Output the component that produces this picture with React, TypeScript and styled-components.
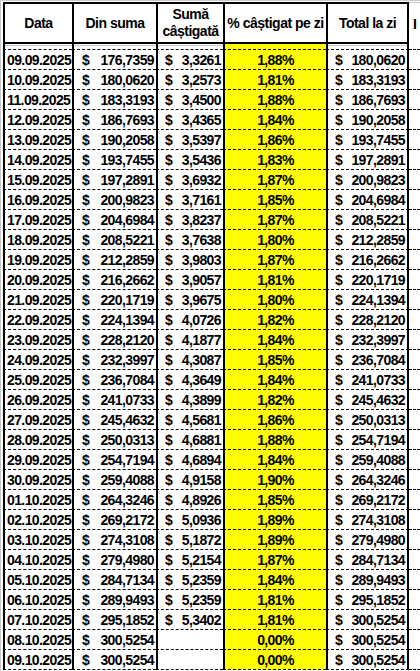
import styled, { createGlobalStyle } from 'styled-components';

type Row = [string, string, string | null, string, string];

const rows: Row[] = [
  ['09.09.2025', '176,7359', '3,3261', '1,88%', '180,0620'],
  ['10.09.2025', '180,0620', '3,2573', '1,81%', '183,3193'],
  ['11.09.2025', '183,3193', '3,4500', '1,88%', '186,7693'],
  ['12.09.2025', '186,7693', '3,4365', '1,84%', '190,2058'],
  ['13.09.2025', '190,2058', '3,5397', '1,86%', '193,7455'],
  ['14.09.2025', '193,7455', '3,5436', '1,83%', '197,2891'],
  ['15.09.2025', '197,2891', '3,6932', '1,87%', '200,9823'],
  ['16.09.2025', '200,9823', '3,7161', '1,85%', '204,6984'],
  ['17.09.2025', '204,6984', '3,8237', '1,87%', '208,5221'],
  ['18.09.2025', '208,5221', '3,7638', '1,80%', '212,2859'],
  ['19.09.2025', '212,2859', '3,9803', '1,87%', '216,2662'],
  ['20.09.2025', '216,2662', '3,9057', '1,81%', '220,1719'],
  ['21.09.2025', '220,1719', '3,9675', '1,80%', '224,1394'],
  ['22.09.2025', '224,1394', '4,0726', '1,82%', '228,2120'],
  ['23.09.2025', '228,2120', '4,1877', '1,84%', '232,3997'],
  ['24.09.2025', '232,3997', '4,3087', '1,85%', '236,7084'],
  ['25.09.2025', '236,7084', '4,3649', '1,84%', '241,0733'],
  ['26.09.2025', '241,0733', '4,3899', '1,82%', '245,4632'],
  ['27.09.2025', '245,4632', '4,5681', '1,86%', '250,0313'],
  ['28.09.2025', '250,0313', '4,6881', '1,88%', '254,7194'],
  ['29.09.2025', '254,7194', '4,6894', '1,84%', '259,4088'],
  ['30.09.2025', '259,4088', '4,9158', '1,90%', '264,3246'],
  ['01.10.2025', '264,3246', '4,8926', '1,85%', '269,2172'],
  ['02.10.2025', '269,2172', '5,0936', '1,89%', '274,3108'],
  ['03.10.2025', '274,3108', '5,1872', '1,89%', '279,4980'],
  ['04.10.2025', '279,4980', '5,2154', '1,87%', '284,7134'],
  ['05.10.2025', '284,7134', '5,2359', '1,84%', '289,9493'],
  ['06.10.2025', '289,9493', '5,2359', '1,81%', '295,1852'],
  ['07.10.2025', '295,1852', '5,3402', '1,81%', '300,5254'],
  ['08.10.2025', '300,5254', null, '0,00%', '300,5254'],
  ['09.10.2025', '300,5254', null, '0,00%', '300,5254'],
];

const GlobalStyle = createGlobalStyle`
  html, body {
    margin: 0;
    padding: 0;
    background: #fff;
    overflow: hidden;
  }
  body {
    font-family: "Liberation Sans", Arial, sans-serif;
    font-size: 14px;
    font-weight: 700;
    color: #000;
  }
`;

function Money({ value, pad }: { value: string | null; pad: number }) {
  if (!value) return null;
  return (
    <MoneyBox $pad={pad}>
      <span>$</span>
      <span>{value}</span>
    </MoneyBox>
  );
}

export default function App() {
  return (
    <>
      <GlobalStyle />
      <Sheet>
        <TopStrip />
        <Grid>
          <HeadCell>Data</HeadCell>
          <HeadCell>Din suma</HeadCell>
          <HeadCell>Sumă<br />câștigată</HeadCell>
          <HeadCell>% câștigat pe zi</HeadCell>
          <HeadCell $last>Total la zi</HeadCell>
          <ExtraHead>I</ExtraHead>

          <Spacer />
          <Spacer />
          <Spacer />
          <Spacer $yellow />
          <Spacer $last />
          <ExtraCell $spacer />

          {rows.map(([date, from, gain, pct, total]) => (
            <RowGroup key={date}>
              <Cell>{date}</Cell>
              <Cell><Money value={from} pad={8} /></Cell>
              <Cell><Money value={gain} pad={7} /></Cell>
              <Cell $yellow $center>{pct}</Cell>
              <Cell $last><Money value={total} pad={7} /></Cell>
              <ExtraCell />
            </RowGroup>
          ))}
        </Grid>
      </Sheet>
    </>
  );
}

const Sheet = styled.div`
  box-sizing: border-box;
  width: 100%;
  border-left: 1px solid #c8c8c8;
  padding-left: 2px;
  height: 671px;
  overflow: hidden;
`;

const TopStrip = styled.div`
  height: 1px;
  border-top: 1px solid #c8c8c8;
  margin-left: -3px;
`;

const Grid = styled.div`
  display: grid;
  grid-template-columns: 69px 84px 67px 103px 83px 1fr;
  grid-auto-rows: auto;
`;

const RowGroup = styled.div`
  display: contents;
`;

const HeadCell = styled.div<{ $last?: boolean }>`
  box-sizing: border-box;
  height: 42px;
  border-top: 2px solid #000;
  border-bottom: 2px solid #000;
  border-left: 2px solid #000;
  border-right: ${(p) => (p.$last ? '2px solid #000' : 'none')};
  display: flex;
  align-items: center;
  justify-content: center;
  text-align: center;
  line-height: 17px;
  background: #fff;
  white-space: nowrap;
  letter-spacing: -0.5px;
`;

const ExtraHead = styled.div`
  box-sizing: border-box;
  height: 42px;
  border-top: 1px solid #c8c8c8;
  display: flex;
  align-items: center;
  padding-left: 4px;
  overflow: hidden;
`;

const Spacer = styled.div<{ $yellow?: boolean; $last?: boolean }>`
  box-sizing: border-box;
  height: 6px;
  border-left: 2px solid #000;
  border-right: ${(p) => (p.$last ? '2px solid #000' : 'none')};
  border-bottom: 1px dashed #000;
  background: ${(p) =>
    p.$yellow
      ? '#ffff00'
      : 'linear-gradient(to bottom, transparent 1px, #c8c8c8 1px, #c8c8c8 2px, transparent 2px), #fff'};
`;

const Cell = styled.div<{ $yellow?: boolean; $center?: boolean; $last?: boolean }>`
  box-sizing: border-box;
  height: 20px;
  border-left: 2px solid #000;
  border-right: ${(p) => (p.$last ? '2px solid #000' : 'none')};
  border-bottom: 1px dashed #000;
  background: ${(p) => (p.$yellow ? '#ffff00' : '#fff')};
  display: flex;
  align-items: center;
  justify-content: ${(p) => (p.$center ? 'center' : 'flex-start')};
  padding-left: ${(p) => (p.$center ? '0' : '2px')};
  white-space: nowrap;
  letter-spacing: -0.6px;
  overflow: hidden;
`;

const ExtraCell = styled.div<{ $spacer?: boolean }>`
  box-sizing: border-box;
  height: ${(p) => (p.$spacer ? '6px' : '20px')};
  border-bottom: 1px dashed #000;
`;

const MoneyBox = styled.div<{ $pad: number }>`
  flex: 1;
  display: flex;
  justify-content: space-between;
  padding-left: ${(p) => p.$pad - 2}px;
  padding-right: 2px;
`;
